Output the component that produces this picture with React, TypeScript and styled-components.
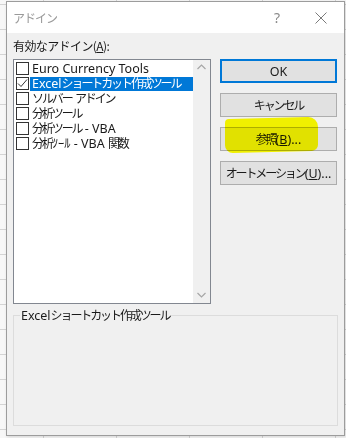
import React from 'react';
import styled, { createGlobalStyle } from 'styled-components';

const Global = createGlobalStyle`
  html, body { margin: 0; padding: 0; }
  body {
    width: 346px;
    height: 438px;
    overflow: hidden;
    background-color: #f7f7f7;
    background-image:
      linear-gradient(to right, #d4d4d4 1px, transparent 1px),
      linear-gradient(to bottom, #d4d4d4 1px, transparent 1px);
    background-size: 73px 25px;
    background-position: -30px 4px;
    font-family: "Noto Sans", "Noto Sans CJK JP", sans-serif;
    font-size: 12px;
    color: #1a1a1a;
  }
`;

const Screen = styled.div`
  padding: 1px 0 0 6px;
`;

const Dialog = styled.div`
  width: 337px;
  height: 433px;
  border: 1px solid #9c9c9c;
  background: #f0f0f0;
  display: flex;
  flex-direction: column;
  box-shadow: 1px 1px 3px rgba(0, 0, 0, 0.15);
`;

const TitleBar = styled.div`
  height: 31px;
  background: #ffffff;
  display: flex;
  align-items: center;
  padding-left: 6px;
  flex-shrink: 0;
`;

const Title = styled.span`
  flex: 1;
  color: #9a9a9a;
  font-family: "Noto Sans CJK JP", sans-serif;
  font-size: 12px;
  letter-spacing: -1px;
`;

const TitleButton = styled.span<{ $w: number }>`
  width: ${p => p.$w}px;
  display: flex;
  justify-content: center;
  align-items: center;
  color: #8a8a8a;
  font-size: 14px;
`;

const Body = styled.div`
  flex: 1;
  padding: 5px 6px 9px 6px;
  display: flex;
  flex-direction: column;
`;

const FieldLabel = styled.div`
  height: 15px;
  line-height: 15px;
  font-family: "Noto Sans CJK JP", sans-serif;
  letter-spacing: -0.6px;
  margin-bottom: 6px;
`;

const Main = styled.div`
  display: flex;
  gap: 9px;
`;

const ListBox = styled.div`
  width: 196px;
  height: 243px;
  border: 1px solid #828790;
  background: #ffffff;
  display: flex;
`;

const Items = styled.div`
  flex: 1;
  padding: 1px 0 0 2px;
`;

const Row = styled.div`
  display: flex;
  align-items: center;
  height: 15px;
`;

const Check = styled.span`
  width: 11px;
  height: 11px;
  border: 1px solid #333333;
  background: #ffffff;
  flex-shrink: 0;
  display: flex;
  align-items: center;
  justify-content: center;
`;

const ItemText = styled.span<{ $selected?: boolean }>`
  flex: 1;
  height: 14px;
  line-height: 14px;
  margin-left: 1px;
  padding-left: 2px;
  white-space: nowrap;
  font-size: 12.5px;
  background: ${p => (p.$selected ? '#0078d7' : 'transparent')};
  color: ${p => (p.$selected ? '#ffffff' : '#1a1a1a')};
`;

const Jp = styled.span`
  font-size: 12px;
  letter-spacing: -2.1px;
`;

const ScrollBar = styled.div`
  width: 17px;
  background: #f0f0f0;
  display: flex;
  flex-direction: column;
  justify-content: space-between;
  align-items: center;
  padding: 4px 0 5px;
`;

const Buttons = styled.div`
  position: relative;
  width: 117px;
  display: flex;
  flex-direction: column;
  gap: 10px;
`;

const Button = styled.div<{ $default?: boolean }>`
  height: ${p => (p.$default ? 20 : 22)}px;
  border: ${p => (p.$default ? '2px solid #0078d7' : '1px solid #adadad')};
  background: #e1e1e1;
  display: flex;
  align-items: center;
  justify-content: center;
  font-size: 12.5px;
  white-space: nowrap;
`;

const Marker = styled.div`
  position: absolute;
  left: 5px;
  top: 59px;
  width: 93px;
  height: 34px;
  background: #ffff00;
  mix-blend-mode: multiply;
  border-radius: 4px 10px 6px 8px;
  transform: skewY(-1.5deg);
`;

const Group = styled.fieldset`
  margin: 2px 0 0;
  flex: 1;
  border: 1px solid #dcdcdc;
  padding: 0;
`;

const Legend = styled.legend`
  margin-left: 6px;
  padding: 0 1px;
  font-size: 12.5px;
`;

const Chevron = ({ up }: { up?: boolean }) => (
  <svg width="9" height="6" viewBox="0 0 9 6">
    <path
      d={up ? 'M0.5 5 L4.5 1 L8.5 5' : 'M0.5 1 L4.5 5 L8.5 1'}
      fill="none"
      stroke="#a6a6a6"
      strokeWidth="1.2"
    />
  </svg>
);

const Tick = () => (
  <svg width="11" height="11" viewBox="0 0 11 11">
    <path d="M1 5.5 L4 8.5 L10 1.5" fill="none" stroke="#333" strokeWidth="1" />
  </svg>
);

// full-width kana/kanji are narrower in the original UI font, so tighten them
const Mixed = ({ text }: { text: string }) => (
  <>
    {text.split(/([\u3000-\u9fff]+)/).map((part, i) =>
      /[\u3000-\u9fff]/.test(part) ? <Jp key={i}>{part}</Jp> : part
    )}
  </>
);

const items = [
  { name: 'Euro Currency Tools', checked: false },
  { name: 'Excelショートカット作成ツール', checked: true, selected: true },
  { name: 'ソルバー アドイン', checked: false },
  { name: '分析ツール', checked: false },
  { name: '分析ツール - VBA', checked: false },
  { name: '分析ﾂｰﾙ - VBA 関数', checked: false },
];

const App = () => (
  <Screen>
    <Global />
    <Dialog>
      <TitleBar>
        <Title>アドイン</Title>
        <TitleButton $w={42}>?</TitleButton>
        <TitleButton $w={46}>
          <svg width="12" height="12" viewBox="0 0 12 12">
            <path d="M0.5 0.5 L11.5 11.5 M11.5 0.5 L0.5 11.5" stroke="#7a7a7a" strokeWidth="1" />
          </svg>
        </TitleButton>
      </TitleBar>
      <Body>
        <FieldLabel>有効なアドイン(<u>A</u>):</FieldLabel>
        <Main>
          <ListBox>
            <Items>
              {items.map(it => (
                <Row key={it.name}>
                  <Check>{it.checked && <Tick />}</Check>
                  <ItemText $selected={it.selected}>
                    <Mixed text={it.name} />
                  </ItemText>
                </Row>
              ))}
            </Items>
            <ScrollBar>
              <Chevron up />
              <Chevron />
            </ScrollBar>
          </ListBox>
          <Buttons>
            <Button $default>OK</Button>
            <Button><Jp>キャンセル</Jp></Button>
            <Button><Jp>参照</Jp>(<u>B</u>)...</Button>
            <Button><Jp>オートメーション</Jp>(<u>U</u>)...</Button>
            <Marker />
          </Buttons>
        </Main>
        <Group>
          <Legend><Mixed text="Excelショートカット作成ツール" /></Legend>
        </Group>
      </Body>
    </Dialog>
  </Screen>
);

export default App;
